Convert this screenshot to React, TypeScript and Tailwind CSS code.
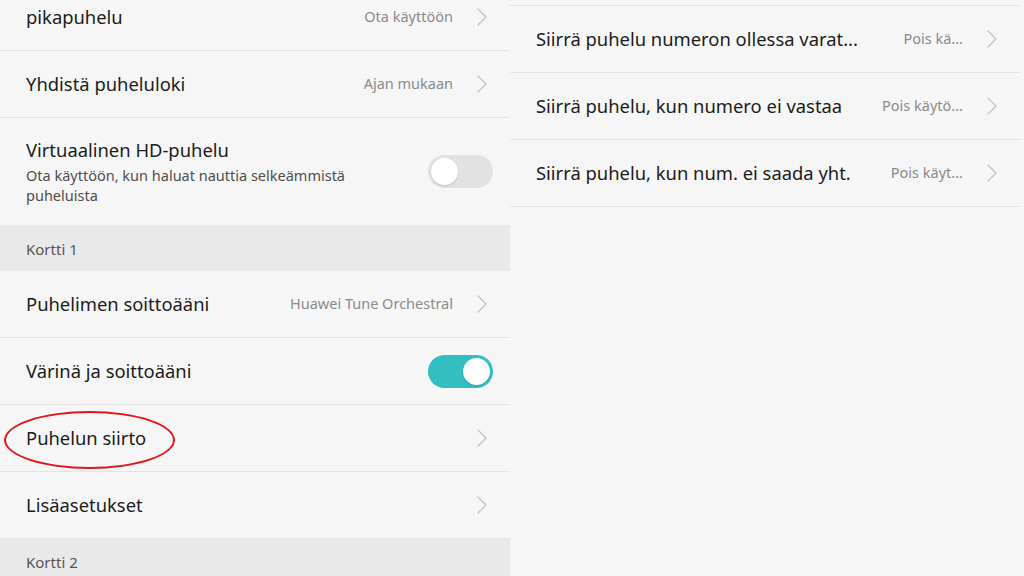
import { ReactNode } from "react";

const Chevron = () => (
  <svg width="12" height="20" viewBox="0 0 12 20" fill="none" className="shrink-0">
    <path d="M2 2l8 8-8 8" stroke="#c4c4c4" strokeWidth="1.4" strokeLinecap="round" strokeLinejoin="round" />
  </svg>
);

const Toggle = ({ on }: { on?: boolean }) => (
  <div
    className={`relative h-[33px] w-[65px] shrink-0 rounded-full ${on ? "bg-[#33bfc2]" : "bg-[#e2e2e2]"}`}
  >
    <div
      className={`absolute top-[3px] h-[27px] w-[27px] rounded-full bg-white shadow-[0_1px_2px_rgba(0,0,0,0.15)] ${
        on ? "right-[3px]" : "left-[3px]"
      }`}
    />
  </div>
);

const Row = ({
  title,
  value,
  right,
  className = "",
}: {
  title: string;
  value?: string;
  right?: ReactNode;
  className?: string;
}) => (
  <div
    className={`flex items-center border-[#e4e4e4] pl-[26px] ${right ? "pr-[17px]" : "pr-[22px]"} ${className}`}
  >
    <span className="flex-1 truncate text-[18.4px] text-[#1c1c1c]">{title}</span>
    {value && <span className="ml-4 text-[14.5px] text-[#8a8a8a]">{value}</span>}
    {right ?? (
      <span className="ml-[23px]">
        <Chevron />
      </span>
    )}
  </div>
);

const Header = ({ label }: { label: string }) => (
  <div className="flex h-[46px] items-center bg-[#e9e9e9] pl-[26px] pt-[2px] text-[15px] text-[#555]">{label}</div>
);

export default function App() {
  return (
    <div
      className="flex h-[576px] w-[1024px] overflow-hidden bg-[#f6f6f6]"
      style={{ fontFamily: "'Noto Sans', 'Open Sans', sans-serif" }}
    >
      {/* vasen paneeli */}
      <div className="w-[510px] shrink-0">
        <Row title="pikapuhelu" value="Ota käyttöön" className="-mt-[16px] h-[67px] border-b" />
        <Row title="Yhdistä puheluloki" value="Ajan mukaan" className="h-[67px] border-b" />
        <div className="flex h-[107px] items-center pl-[26px] pr-[17px]">
          <div className="flex-1">
            <div className="text-[18.4px] leading-[24px] text-[#1c1c1c]">Virtuaalinen HD-puhelu</div>
            <div className="mt-[3px] max-w-[360px] text-[14.5px] leading-[20px] text-[#4e4e4e]">
              Ota käyttöön, kun haluat nauttia selkeämmistä puheluista
            </div>
          </div>
          <Toggle />
        </div>
        <Header label="Kortti 1" />
        <Row title="Puhelimen soittoääni" value="Huawei Tune Orchestral" className="h-[67px] border-b" />
        <Row title="Värinä ja soittoääni" right={<Toggle on />} className="h-[67px] border-b" />
        <div className="relative">
          <Row title="Puhelun siirto" className="h-[67px] border-b" />
          <div className="pointer-events-none absolute left-[4px] top-[6px] h-[58px] w-[171px] rounded-[50%] border-2 border-[#e0161b]" />
        </div>
        <Row title="Lisäasetukset" className="h-[66px]" />
        <Header label="Kortti 2" />
      </div>

      {/* oikea paneeli */}
      <div className="flex-1 pt-[5px] pr-[4px]">
        <div className="border-t border-[#e4e4e4]">
          <Row title="Siirrä puhelu numeron ollessa varat..." value="Pois kä..." className="h-[67px] border-b" />
          <Row title="Siirrä puhelu, kun numero ei vastaa" value="Pois käytö..." className="h-[67px] border-b" />
          <Row title="Siirrä puhelu, kun num. ei saada yht." value="Pois käyt..." className="h-[67px] border-b" />
        </div>
      </div>
    </div>
  );
}
